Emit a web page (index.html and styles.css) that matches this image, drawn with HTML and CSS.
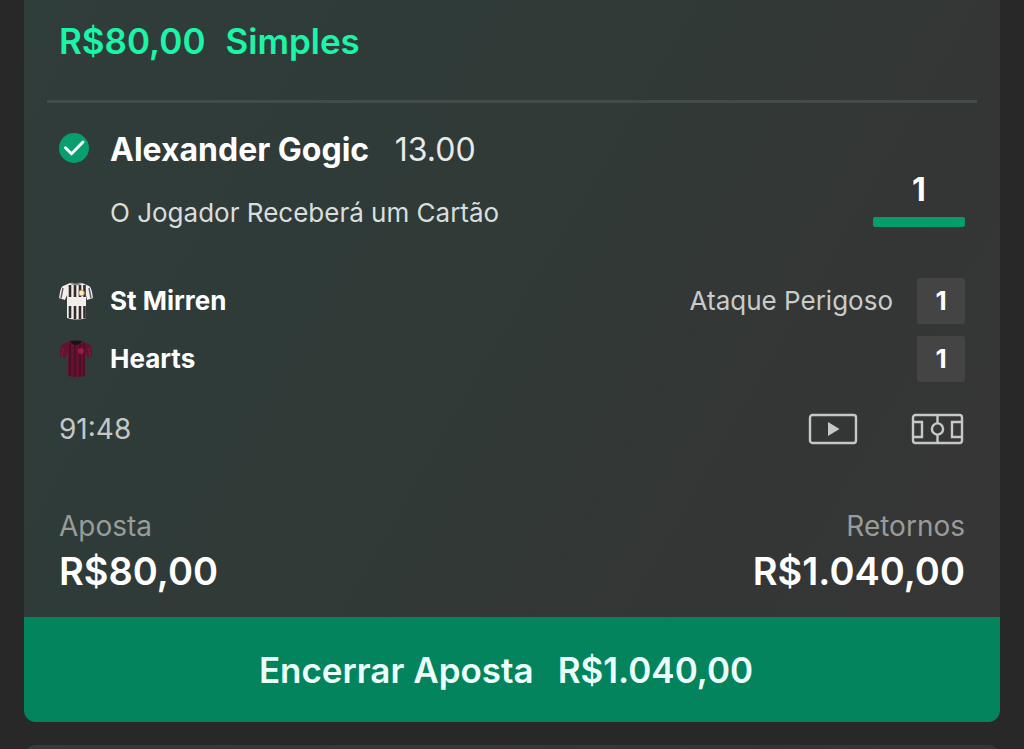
FILE: index.html
```html
<!DOCTYPE html>
<html lang="pt-BR">
<head>
  <meta charset="UTF-8" />
  <meta name="viewport" content="width=device-width, initial-scale=1.0" />
  <title>Minhas Apostas</title>
  <link rel="stylesheet" href="styles.css">
</head>
<body>
  <main class="bets">
    <article class="bet">
      <header class="bet-header">
        <span>R$80,00</span>
        <span>Simples</span>
      </header>

      <section class="selection">
        <svg class="check" viewBox="0 0 30 30" aria-hidden="true">
          <circle cx="15" cy="15" r="15" fill="#089e6d" />
          <path d="M6.5 14.8 12.5 20.8 24 9" fill="none" stroke="#f2fffa" stroke-width="3" stroke-linecap="round" stroke-linejoin="round" />
        </svg>
        <div class="selection-info">
          <h2 class="selection-title">Alexander Gogic <span class="odds">13.00</span></h2>
          <p class="market">O Jogador Receberá um Cartão</p>
        </div>
        <div class="progress">
          <span>1</span>
          <div class="progress-bar"></div>
        </div>
      </section>

      <section class="teams">
        <div class="team">
          <!-- St Mirren kit -->
          <svg class="shirt" viewBox="0 0 34 38" aria-hidden="true">
            <path d="M11 1 4 4Q2 5 1 10L0 16 6 18 8 13V36Q17 39 27 36V13L28 18 34 16 33 10Q32 5 30 4L23 1Q17 4 11 1Z" fill="#f1eeec" />
            <path d="M4 6 2 16M30 6 32 16" stroke="#5d5655" stroke-width="1.4" />
            <path d="M11 3V15M16 3V15M21 3V15M25.5 3V15M11 24V36M16 24V37M21 24V37M25.5 24V36" stroke="#332a2b" stroke-width="2.6" />
            <path d="M12 1Q17 4 22 1" fill="none" stroke="#8c8a8a" stroke-width="2" />
            <circle cx="22.5" cy="11" r="2.8" fill="#f3ecd2" stroke="#b59a4e" stroke-width="1" />
          </svg>
          <span class="team-name">St Mirren</span>
          <span class="event">Ataque Perigoso</span>
          <span class="score">1</span>
        </div>
        <div class="team">
          <!-- Hearts kit -->
          <svg class="shirt" viewBox="0 0 34 38" aria-hidden="true">
            <path d="M11 1 4 4Q2 5 1 11V16L6 18 9 13V36Q17 38 26 36V13L28 18 33 16V11Q32 5 30 4L23 1Q17 4 11 1Z" fill="#64132f" />
            <path d="M11 3V36M16 4V37M21 4V37M25 3V36" stroke="#471026" stroke-width="1.6" />
            <path d="M4 8 3 16M30 8 31 16" stroke="#7c1f3e" stroke-width="1" />
            <path d="M11 1Q17 0 23 1 21 5 17 5T11 1Z" fill="#181316" />
            <circle cx="22" cy="11" r="3" fill="#9c1b40" />
          </svg>
          <span class="team-name">Hearts</span>
          <span class="score">1</span>
        </div>
      </section>

      <div class="match">
        <span class="clock">91:48</span>
        <button class="icon-btn" type="button" aria-label="Assistir ao vivo">
          <svg width="50" height="32" viewBox="0 0 50 32" fill="none">
            <rect x="2" y="2" width="46" height="28" rx="2.5" stroke="#c6c8c7" stroke-width="2.4" />
            <path d="M20 9 31.5 16 20 23Z" fill="#c6c8c7" />
          </svg>
        </button>
        <button class="icon-btn" type="button" aria-label="Campo ao vivo">
          <svg width="54" height="32" viewBox="0 0 54 32" fill="none" stroke="#c6c8c7" stroke-width="2.4">
            <rect x="3" y="2" width="49" height="28" rx="2.5" />
            <path d="M27.5 2V10M27.5 22V30M3 9H12V24H3M52 9H42V24H52" />
            <circle cx="27.5" cy="16" r="5.6" />
          </svg>
        </button>
      </div>

      <dl class="amounts">
        <div>
          <dt>Aposta</dt>
          <dd>R$80,00</dd>
        </div>
        <div class="returns">
          <dt>Retornos</dt>
          <dd>R$1.040,00</dd>
        </div>
      </dl>

      <button class="cashout" type="button">
        <span>Encerrar Aposta</span>
        <span>R$1.040,00</span>
      </button>
    </article>

    <article class="bet next-bet"></article>
  </main>
</body>
</html>
```

FILE: styles.css
```css
* {
  box-sizing: border-box;
}

body {
  margin: 0;
  font-family: Inter, "Liberation Sans", sans-serif;
  font-size: 26px;
  line-height: 32px;
  color: #fff;
  background-color: #282828;
}

h2, p, dl, dd {
  margin: 0;
}

button {
  border: 0;
  font: inherit;
  color: inherit;
  cursor: pointer;
}

.bets {
  display: flex;
  flex-direction: column;
  gap: 23px;
  height: 100vh;
  padding: 0 24px;
  overflow: hidden;
}

.bet {
  flex: none;
  border-radius: 0 0 12px 12px;
  background: linear-gradient(120deg, #2f3d3b 0%, #303a37 45%, #343635 72%, #363636 100%);
  overflow: hidden;
}

.bet-header {
  display: flex;
  gap: 20px;
  margin: 0 23px;
  padding: 21px 12px 39px;
  border-bottom: 3px solid #434c49;
  font-size: 35px;
  font-weight: 600;
  line-height: 40px;
  color: #1af5a8;
}

.selection {
  display: flex;
  padding: 27px 35px 0;
}

.check {
  width: 30px;
  height: 30px;
  margin: 3px 21px 0 0;
}

.selection-info {
  flex: 1;
}

.selection-title {
  font-size: 32px;
  font-weight: 700;
  line-height: 40px;
}

.odds {
  margin-left: 18px;
  font-weight: 400;
  color: #e6eae8;
}

.market {
  margin-top: 27px;
  color: #d9dedc;
}

.progress {
  width: 92px;
  padding-top: 40px;
  font-size: 32px;
  font-weight: 700;
  line-height: 40px;
  text-align: center;
}

.progress-bar {
  height: 10px;
  margin-top: 7px;
  border-radius: 2px;
  background-color: #079c6b;
}

.teams {
  display: flex;
  flex-direction: column;
  gap: 12px;
  padding: 49px 35px 0;
}

.team {
  display: flex;
  align-items: center;
}

.shirt {
  width: 34px;
  height: 38px;
  margin-right: 17px;
}

.team-name {
  flex: 1;
  font-weight: 700;
}

.event {
  margin-right: 24px;
  color: #c9cccb;
}

.score {
  width: 48px;
  border-radius: 2px;
  font-weight: 700;
  line-height: 46px;
  text-align: center;
  background-color: #434443;
}

.match {
  display: flex;
  align-items: center;
  gap: 52px;
  padding: 31px 36px 0 35px;
}

.clock {
  flex: 1;
  font-size: 28px;
  color: #c3c8c6;
}

.icon-btn {
  display: flex;
  padding: 0;
  background: none;
}

.amounts {
  display: flex;
  justify-content: space-between;
  padding: 65px 35px 20px;
}

.amounts dt {
  font-size: 28px;
  color: #989c9a;
}

.amounts dd {
  margin-top: 3px;
  font-size: 38px;
  font-weight: 600;
  line-height: 52px;
}

.returns {
  text-align: right;
}

.cashout {
  display: flex;
  justify-content: center;
  align-items: center;
  gap: 24px;
  width: 100%;
  height: 105px;
  padding: 0 12px 0 0;
  font-size: 35px;
  font-weight: 600;
  color: #ecfffa;
  background-color: #03845d;
}

.next-bet {
  height: 120px;
  border-radius: 12px;
}
```
